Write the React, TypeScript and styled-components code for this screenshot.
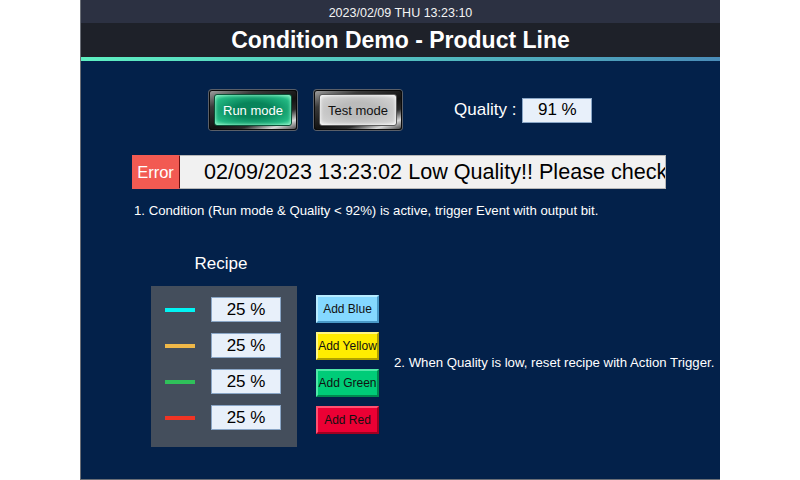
import React from "react";
import styled, { createGlobalStyle } from "styled-components";

const GlobalStyle = createGlobalStyle`
  html, body { margin: 0; padding: 0; background: #ffffff; }
  body { font-family: "Liberation Sans", Arial, sans-serif; }
  * { box-sizing: border-box; }
`;

const Screen = styled.div`
  width: 640px;
  height: 480px;
  margin: 0 auto;
  border-left: 1px solid #6a6e76;
  border-bottom: 1px solid #6a6e76;
  background: #03214a;
  display: flex;
  flex-direction: column;
  overflow: hidden;
  color: #ffffff;
`;

const DateBar = styled.div`
  height: 23px;
  padding-top: 2px;
  background: #2c3142;
  display: flex;
  align-items: center;
  justify-content: center;
  font-size: 12.5px;
  color: #f4f4f4;
`;

const TitleBar = styled.div`
  height: 34px;
  background: #1e2129;
  display: flex;
  align-items: center;
  justify-content: center;
  font-size: 23px;
  font-weight: bold;
  color: #ffffff;
`;

const AccentLine = styled.div`
  height: 4px;
  background: linear-gradient(90deg, #5ef0c2 0%, #52c0c0 50%, #4a8cb8 100%);
`;

const Main = styled.div`
  flex: 1;
  display: flex;
  flex-direction: column;
`;

const ControlRow = styled.div`
  display: flex;
  align-items: center;
  margin-top: 29px;
  padding-left: 128px;
  height: 40px;
`;

const MetalFrame = styled.div<{ $gap?: number }>`
  width: 88px;
  height: 40px;
  margin-right: ${(p) => p.$gap ?? 0}px;
  padding: 4px 5px;
  border-radius: 3px;
  background: linear-gradient(
    160deg,
    #a8a8a8 0%,
    #3a3a3a 25%,
    #121212 55%,
    #2a2a2a 70%,
    #d8d8d8 85%,
    #3a3a3a 100%
  );
  box-shadow: inset 0 0 0 1px #0a0a0a, 0 0 0 1px #5a5f68;
  display: flex;
`;

const ButtonFace = styled.div<{ $variant: "green" | "gray" }>`
  flex: 1;
  border-radius: 3px;
  display: flex;
  align-items: center;
  justify-content: center;
  font-size: 13px;
  color: ${(p) => (p.$variant === "green" ? "#ffffff" : "#111111")};
  border: 1px solid ${(p) => (p.$variant === "green" ? "#0b4f36" : "#5a5a5a")};
  background: ${(p) =>
    p.$variant === "green"
      ? "radial-gradient(ellipse at center, #08845a 35%, #22b882 78%, #6ae8b4 100%)"
      : "radial-gradient(ellipse at center, #bbbbbb 35%, #d0d0d0 80%, #ededed 100%)"};
  box-shadow: inset 0 0 3px 1px
    ${(p) => (p.$variant === "green" ? "rgba(180,255,220,0.6)" : "rgba(255,255,255,0.7)")};
`;

const QualityLabel = styled.span`
  margin-left: 52px;
  margin-right: 6px;
  font-size: 17px;
  color: #ffffff;
`;

const ValueBox = styled.div`
  width: 70px;
  height: 25px;
  background: #e8f0fa;
  border: 1px solid #8aa6c6;
  color: #000000;
  font-size: 17px;
  display: flex;
  align-items: center;
  justify-content: center;
`;

const ErrorRow = styled.div`
  display: flex;
  margin-top: 25px;
  margin-left: 51px;
  height: 34px;
`;

const ErrorTag = styled.div`
  width: 47px;
  background: #f25a52;
  color: #ffffff;
  font-size: 16.5px;
  display: flex;
  align-items: center;
  justify-content: center;
`;

const Message = styled.div`
  width: 487px;
  background: #f1f1f1;
  border: 1px solid #b8b8b8;
  border-left: 1px solid #6a1010;
  color: #000000;
  font-size: 21.6px;
  padding-left: 24px;
  display: flex;
  align-items: center;
  white-space: nowrap;
  overflow: hidden;
`;

const Note = styled.div<{ $left: number; $top?: number; $lift?: number }>`
  margin-left: ${(p) => p.$left}px;
  margin-top: ${(p) => p.$top ?? 0}px;
  margin-bottom: ${(p) => p.$lift ?? 0}px;
  font-size: 13.2px;
  line-height: 15px;
  color: #ffffff;
  white-space: nowrap;
`;

const Bottom = styled.div`
  display: flex;
  align-items: flex-start;
  margin-top: 36px;
  margin-left: 70px;
`;

const RecipeColumn = styled.div`
  width: 146px;
  display: flex;
  flex-direction: column;
  align-items: center;
`;

const RecipeTitle = styled.div`
  font-size: 17px;
  line-height: 20px;
  margin-bottom: 12px;
  margin-left: -6px;
  color: #ffffff;
`;

const RecipePanel = styled.div`
  width: 146px;
  height: 161px;
  background: #444e5c;
  padding: 11px 16px 0 14px;
  display: flex;
  flex-direction: column;
  gap: 11px;
`;

const RecipeRow = styled.div`
  display: flex;
  align-items: center;
  gap: 16px;
`;

const Swatch = styled.div<{ $color: string }>`
  width: 30px;
  height: 4px;
  background: ${(p) => p.$color};
`;

const ActionArea = styled.div`
  display: flex;
  align-items: center;
  margin-left: 19px;
  margin-top: 41px;
`;

const ActionColumn = styled.div`
  display: flex;
  flex-direction: column;
  gap: 9px;
`;

const AddButton = styled.div<{ $bg: string; $light: string; $dark: string }>`
  width: 63px;
  height: 28px;
  background: ${(p) => p.$bg};
  border-top: 2px solid ${(p) => p.$light};
  border-left: 2px solid ${(p) => p.$light};
  border-bottom: 2px solid ${(p) => p.$dark};
  border-right: 2px solid ${(p) => p.$dark};
  color: #111111;
  font-size: 12px;
  display: flex;
  align-items: center;
  justify-content: center;
  white-space: nowrap;
`;

const recipe = [
  { color: "#00f4f4", value: "25 %" },
  { color: "#f0b848", value: "25 %" },
  { color: "#2fc05a", value: "25 %" },
  { color: "#f03424", value: "25 %" },
];

const actions = [
  { label: "Add Blue", bg: "#84d8ff", light: "#b8ecff", dark: "#4a9ac8" },
  { label: "Add Yellow", bg: "#ffec00", light: "#fff680", dark: "#b0a000" },
  { label: "Add Green", bg: "#00cc78", light: "#50e8a8", dark: "#008a50" },
  { label: "Add Red", bg: "#ec0034", light: "#ff5070", dark: "#a00020" },
];

export default function App() {
  return (
    <>
      <GlobalStyle />
      <Screen>
        <DateBar>2023/02/09 THU 13:23:10</DateBar>
        <TitleBar>Condition Demo - Product Line</TitleBar>
        <AccentLine />
        <Main>
          <ControlRow>
            <MetalFrame $gap={17}>
              <ButtonFace $variant="green">Run mode</ButtonFace>
            </MetalFrame>
            <MetalFrame>
              <ButtonFace $variant="gray">Test mode</ButtonFace>
            </MetalFrame>
            <QualityLabel>Quality :</QualityLabel>
            <ValueBox>91 %</ValueBox>
          </ControlRow>
          <ErrorRow>
            <ErrorTag>Error</ErrorTag>
            <Message>02/09/2023 13:23:02 Low Quality!! Please check</Message>
          </ErrorRow>
          <Note $left={53} $top={14}>
            1. Condition (Run mode &amp; Quality &lt; 92%) is active, trigger Event with output bit.
          </Note>
          <Bottom>
            <RecipeColumn>
              <RecipeTitle>Recipe</RecipeTitle>
              <RecipePanel>
                {recipe.map((r, i) => (
                  <RecipeRow key={i}>
                    <Swatch $color={r.color} />
                    <ValueBox>{r.value}</ValueBox>
                  </RecipeRow>
                ))}
              </RecipePanel>
            </RecipeColumn>
            <ActionArea>
              <ActionColumn>
                {actions.map((a) => (
                  <AddButton key={a.label} $bg={a.bg} $light={a.light} $dark={a.dark}>
                    {a.label}
                  </AddButton>
                ))}
              </ActionColumn>
              <Note $left={15} $lift={4}>
                2. When Quality is low, reset recipe with Action Trigger.
              </Note>
            </ActionArea>
          </Bottom>
        </Main>
      </Screen>
    </>
  );
}
